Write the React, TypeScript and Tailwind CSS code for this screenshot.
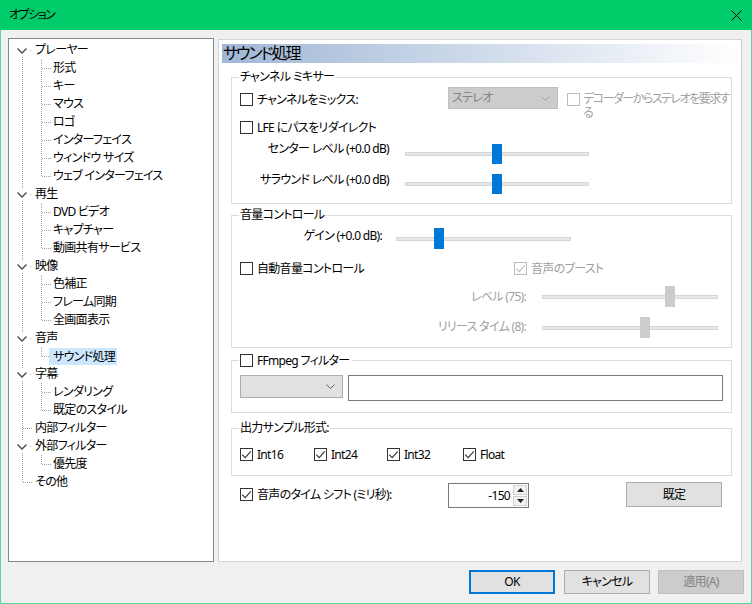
import React from "react";

const FONT =
  "font-['Noto_Sans','Noto_Sans_CJK_JP',sans-serif] [font-feature-settings:'palt']";

const LINE = "#a0a0a0";

type Node = { label: string; children?: string[] };

const tree: Node[] = [
  {
    label: "プレーヤー",
    children: ["形式", "キー", "マウス", "ロゴ", "インターフェイス", "ウィンドウ サイズ", "ウェブ インターフェイス"],
  },
  { label: "再生", children: ["DVD ビデオ", "キャプチャー", "動画共有サービス"] },
  { label: "映像", children: ["色補正", "フレーム同期", "全画面表示"] },
  { label: "音声", children: ["サウンド処理"] },
  { label: "字幕", children: ["レンダリング", "既定のスタイル"] },
  { label: "内部フィルター" },
  { label: "外部フィルター", children: ["優先度"] },
  { label: "その他" },
];

function TopRow({ label, first, last, expandable }: { label: string; first: boolean; last: boolean; expandable: boolean }) {
  return (
    <div className="flex h-[18px] items-center">
      <svg width="26" height="18" className="shrink-0" shapeRendering="crispEdges">
        <line x1="13.5" y1={first ? 10 : 0} x2="13.5" y2={last ? 9 : 18} stroke={LINE} strokeDasharray="1 1" />
        {expandable ? (
          <>
            <rect x="7" y="3" width="13" height="13" fill="#fff" />
            <path d="M8.5 7.5 L13 12 L17.5 7.5" fill="none" stroke="#444" strokeWidth="1.3" shapeRendering="auto" />
            <rect x="21" y="9" width="1" height="1" fill={LINE} />
          </>
        ) : (
          <line x1="14" y1="9.5" x2="24" y2="9.5" stroke={LINE} strokeDasharray="1 1" />
        )}
      </svg>
      <span className="whitespace-nowrap leading-[18px]">{label}</span>
    </div>
  );
}

function ChildRow({ label, lastChild, selected }: { label: string; lastChild: boolean; selected: boolean }) {
  return (
    <div className="flex h-[18px] items-center">
      <svg width="44" height="18" className="shrink-0" shapeRendering="crispEdges">
        <line x1="13.5" y1="0" x2="13.5" y2="18" stroke={LINE} strokeDasharray="1 1" />
        <line x1="32.5" y1="0" x2="32.5" y2={lastChild ? 9 : 18} stroke={LINE} strokeDasharray="1 1" />
        <line x1="33" y1="9.5" x2="43" y2="9.5" stroke={LINE} strokeDasharray="1 1" />
      </svg>
      <span
        className={
          selected
            ? "ml-[-4px] h-[17px] whitespace-nowrap bg-[#cce8ff] pl-[4px] pr-[2px] leading-[17px]"
            : "whitespace-nowrap leading-[18px]"
        }
      >
        {label}
      </span>
    </div>
  );
}

function CheckBox({ checked = false, disabled = false }: { checked?: boolean; disabled?: boolean }) {
  return (
    <span
      className={`flex h-[13px] w-[13px] shrink-0 items-center justify-center border bg-white ${
        disabled ? "border-[#bcbcbc]" : "border-[#333333]"
      }`}
    >
      {checked && (
        <svg width="11" height="11" viewBox="0 0 11 11">
          <path
            d="M1.2 5.6 L4.2 8.6 L9.8 2.4"
            fill="none"
            stroke={disabled ? "#bcbcbc" : "#333"}
            strokeWidth="1.1"
          />
        </svg>
      )}
    </span>
  );
}

function Check({ label, checked, disabled }: { label: string; checked?: boolean; disabled?: boolean }) {
  return (
    <label className={`flex h-[13px] items-center gap-[4px] whitespace-nowrap ${disabled ? "text-[#a0a0a0]" : ""}`}>
      <CheckBox checked={checked} disabled={disabled} />
      <span className="leading-[13px]">{label}</span>
    </label>
  );
}

function Slider({ className, pos, disabled = false }: { className: string; pos: number; disabled?: boolean }) {
  return (
    <div className={`relative flex shrink-0 items-center ${className}`}>
      <div className="h-[4px] w-full border border-[#d6d6d6] bg-[#e7e7e7]" />
      <div
        className={`absolute top-0 h-full w-[10px] ${disabled ? "bg-[#cccccc]" : "bg-[#0078d7]"}`}
        style={{ left: pos }}
      />
    </div>
  );
}

function Chevron({ color }: { color: string }) {
  return (
    <svg width="9" height="5" viewBox="0 0 9 5">
      <path d="M0.5 0.5 L4.5 4.5 L8.5 0.5" fill="none" stroke={color} strokeWidth="1" />
    </svg>
  );
}

function Group({ label, className, children }: { label: React.ReactNode; className: string; children: React.ReactNode }) {
  return (
    <div className={`relative ml-[12px] mr-[9px] border border-[#dcdcdc] ${className}`}>
      {typeof label === "string" ? (
        <span className="absolute left-[7px] top-[-9px] bg-white px-[1px] leading-[16px]">{label}</span>
      ) : (
        label
      )}
      {children}
    </div>
  );
}

export default function App() {
  return (
    <div
      className={`${FONT} flex h-[604px] w-[752px] flex-col bg-[#f0f0f0] text-[12px] tracking-[-0.7px] text-black`}
    >
      {/* title bar */}
      <div className="flex h-[30px] shrink-0 items-center justify-between bg-[#00cc6a] pl-[9px] pr-[10px]">
        <span className="leading-[16px] tracking-[-1.5px]">オプション</span>
        <svg width="11" height="11" viewBox="0 0 11 11">
          <path d="M0.5 0.5 L10.5 10.5 M10.5 0.5 L0.5 10.5" stroke="#000" strokeWidth="1" />
        </svg>
      </div>

      <div className="flex flex-1 flex-col border-x border-b border-[#5fd398]">
        <div className="ml-[7px] mt-[8px] flex h-[524px] gap-[4px]">
          {/* tree */}
          <div className="h-full w-[206px] shrink-0 border border-[#828790] bg-white pt-[2px]">
            {tree.map((node, i) => (
              <div key={node.label}>
                <TopRow
                  label={node.label}
                  first={i === 0}
                  last={i === tree.length - 1}
                  expandable={!!node.children}
                />
                {node.children?.map((c, j) => (
                  <ChildRow
                    key={c}
                    label={c}
                    lastChild={j === node.children!.length - 1}
                    selected={c === "サウンド処理"}
                  />
                ))}
              </div>
            ))}
          </div>

          {/* page */}
          <div className="mt-[1px] h-[523px] w-[524px] shrink-0 border border-[#d4d4d4] bg-white">
            <div className="ml-[3px] mr-[1px] mt-[4px] h-[19px] bg-[linear-gradient(to_right,#a0b7d6,#ffffff)] pl-[1px] text-[16px] leading-[19px] tracking-[-2px]">
              サウンド処理
            </div>

            {/* channel mixer */}
            <Group label="チャンネル ミキサー" className="mt-[14px] pb-[9px] pt-[9px]">
              <div className="flex h-[22px] items-start pl-[8px]">
                <div className="mt-[6px] w-[208px] shrink-0">
                  <Check label="チャンネルをミックス:" />
                </div>
                <div className="flex h-[22px] w-[110px] shrink-0 items-center justify-between border border-[#bfbfbf] bg-[#cccccc] pl-[3px] pr-[7px] text-[#838383]">
                  <span className="leading-[16px]">ステレオ</span>
                  <Chevron color="#a0a0a0" />
                </div>
                <div className="ml-[9px] mt-[6px] flex items-start gap-[3px] text-[#a0a0a0]">
                  <CheckBox disabled />
                  <span className="mt-[-1px] whitespace-nowrap leading-[14px] tracking-[-1.5px]">
                    デコーダーからステレオを要求す
                    <br />る
                  </span>
                </div>
              </div>
              <div className="mt-[12px] pl-[8px]">
                <Check label="LFE にパスをリダイレクト" />
              </div>
              <div className="mt-[10px] flex h-[20px] items-start">
                <span className="mt-[-3px] w-[157px] shrink-0 whitespace-nowrap text-right leading-[16px]">
                  センター レベル (+0.0 dB)
                </span>
                <Slider className="ml-[16px] h-[20px] w-[184px]" pos={87} />
              </div>
              <div className="mt-[10px] flex h-[20px] items-start">
                <span className="mt-[-2px] w-[157px] shrink-0 whitespace-nowrap text-right leading-[16px]">
                  サラウンド レベル (+0.0 dB)
                </span>
                <Slider className="ml-[16px] h-[20px] w-[184px]" pos={87} />
              </div>
            </Group>

            {/* volume */}
            <Group label="音量コントロール" className="mt-[11px] pb-[9px] pt-[12px]">
              <div className="flex h-[21px] items-start">
                <span className="w-[150px] shrink-0 whitespace-nowrap text-right leading-[16px]">ゲイン (+0.0 dB):</span>
                <Slider className="ml-[14px] h-[21px] w-[175px]" pos={38} />
              </div>
              <div className="mt-[13px] flex pl-[8px]">
                <div className="w-[274px] shrink-0">
                  <Check label="自動音量コントロール" />
                </div>
                <Check label="音声のブースト" checked disabled />
              </div>
              <div className="mt-[11px] flex h-[21px] items-start">
                <span className="mt-[3px] w-[294px] shrink-0 whitespace-nowrap text-right leading-[16px] text-[#a0a0a0]">
                  レベル (75):
                </span>
                <Slider className="ml-[16px] h-[21px] w-[176px]" pos={123} disabled />
              </div>
              <div className="mt-[10px] flex h-[21px] items-start">
                <span className="mt-[2px] w-[294px] shrink-0 whitespace-nowrap text-right leading-[16px] text-[#a0a0a0]">
                  リリース タイム (8):
                </span>
                <Slider className="ml-[16px] h-[21px] w-[176px]" pos={98} disabled />
              </div>
            </Group>

            {/* ffmpeg */}
            <Group
              label={
                <span className="absolute left-[7px] top-[-7px] bg-white pl-[1px] pr-[2px]">
                  <Check label="FFmpeg フィルター" />
                </span>
              }
              className="mt-[12px] pb-[11px] pt-[14px]"
            >
              <div className="flex items-start pl-[8px]">
                <div className="flex h-[23px] w-[103px] shrink-0 items-center justify-end border border-[#adadad] bg-[#e1e1e1] pr-[7px]">
                  <Chevron color="#606060" />
                </div>
                <div className="ml-[5px] h-[26px] w-[375px] shrink-0 border border-[#7a7a7a] bg-white" />
              </div>
            </Group>

            {/* sample format */}
            <Group label="出力サンプル形式:" className="mt-[15px] pb-[14px] pt-[19px]">
              <div className="flex pl-[8px]">
                <div className="w-[74px] shrink-0">
                  <Check label="Int16" checked />
                </div>
                <div className="w-[73px] shrink-0">
                  <Check label="Int24" checked />
                </div>
                <div className="w-[76px] shrink-0">
                  <Check label="Int32" checked />
                </div>
                <Check label="Float" checked />
              </div>
            </Group>

            {/* time shift */}
            <div className="ml-[12px] mt-[7px] flex items-start">
              <div className="w-[217px] shrink-0 pl-[9px] pt-[5px]">
                <Check label="音声のタイム シフト (ミリ秒):" checked />
              </div>
              <div className="flex h-[25px] w-[81px] shrink-0 border border-[#7a7a7a] bg-white">
                <span className="flex-1 pr-[2px] text-right leading-[23px]">-150</span>
                <div className="flex w-[16px] flex-col gap-[1px] p-[1px]">
                  <div className="flex flex-1 items-center justify-center border border-[#cfcfcf] bg-[#f3f3f3]">
                    <svg width="7" height="4" viewBox="0 0 7 4">
                      <path d="M0 4 L3.5 0 L7 4 Z" fill="#222" />
                    </svg>
                  </div>
                  <div className="flex flex-1 items-center justify-center border border-[#cfcfcf] bg-[#f3f3f3]">
                    <svg width="7" height="4" viewBox="0 0 7 4">
                      <path d="M0 0 L3.5 4 L7 0 Z" fill="#222" />
                    </svg>
                  </div>
                </div>
              </div>
              <button className="ml-[97px] mt-[-1px] h-[25px] w-[96px] shrink-0 border border-[#adadad] bg-[#e1e1e1] leading-[16px]">
                既定
              </button>
            </div>
          </div>
        </div>

        {/* dialog buttons */}
        <div className="mt-[8px] flex justify-end pr-[7px]">
          <button className="h-[24px] w-[86px] border-2 border-[#0078d7] bg-[#e1e1e1] leading-[16px]">OK</button>
          <button className="ml-[9px] h-[24px] w-[86px] border border-[#adadad] bg-[#e1e1e1] leading-[16px]">
            キャンセル
          </button>
          <button className="ml-[8px] h-[24px] w-[86px] border border-[#bfbfbf] bg-[#cccccc] leading-[16px] text-[#838383]">
            適用(A)
          </button>
        </div>
      </div>
    </div>
  );
}
